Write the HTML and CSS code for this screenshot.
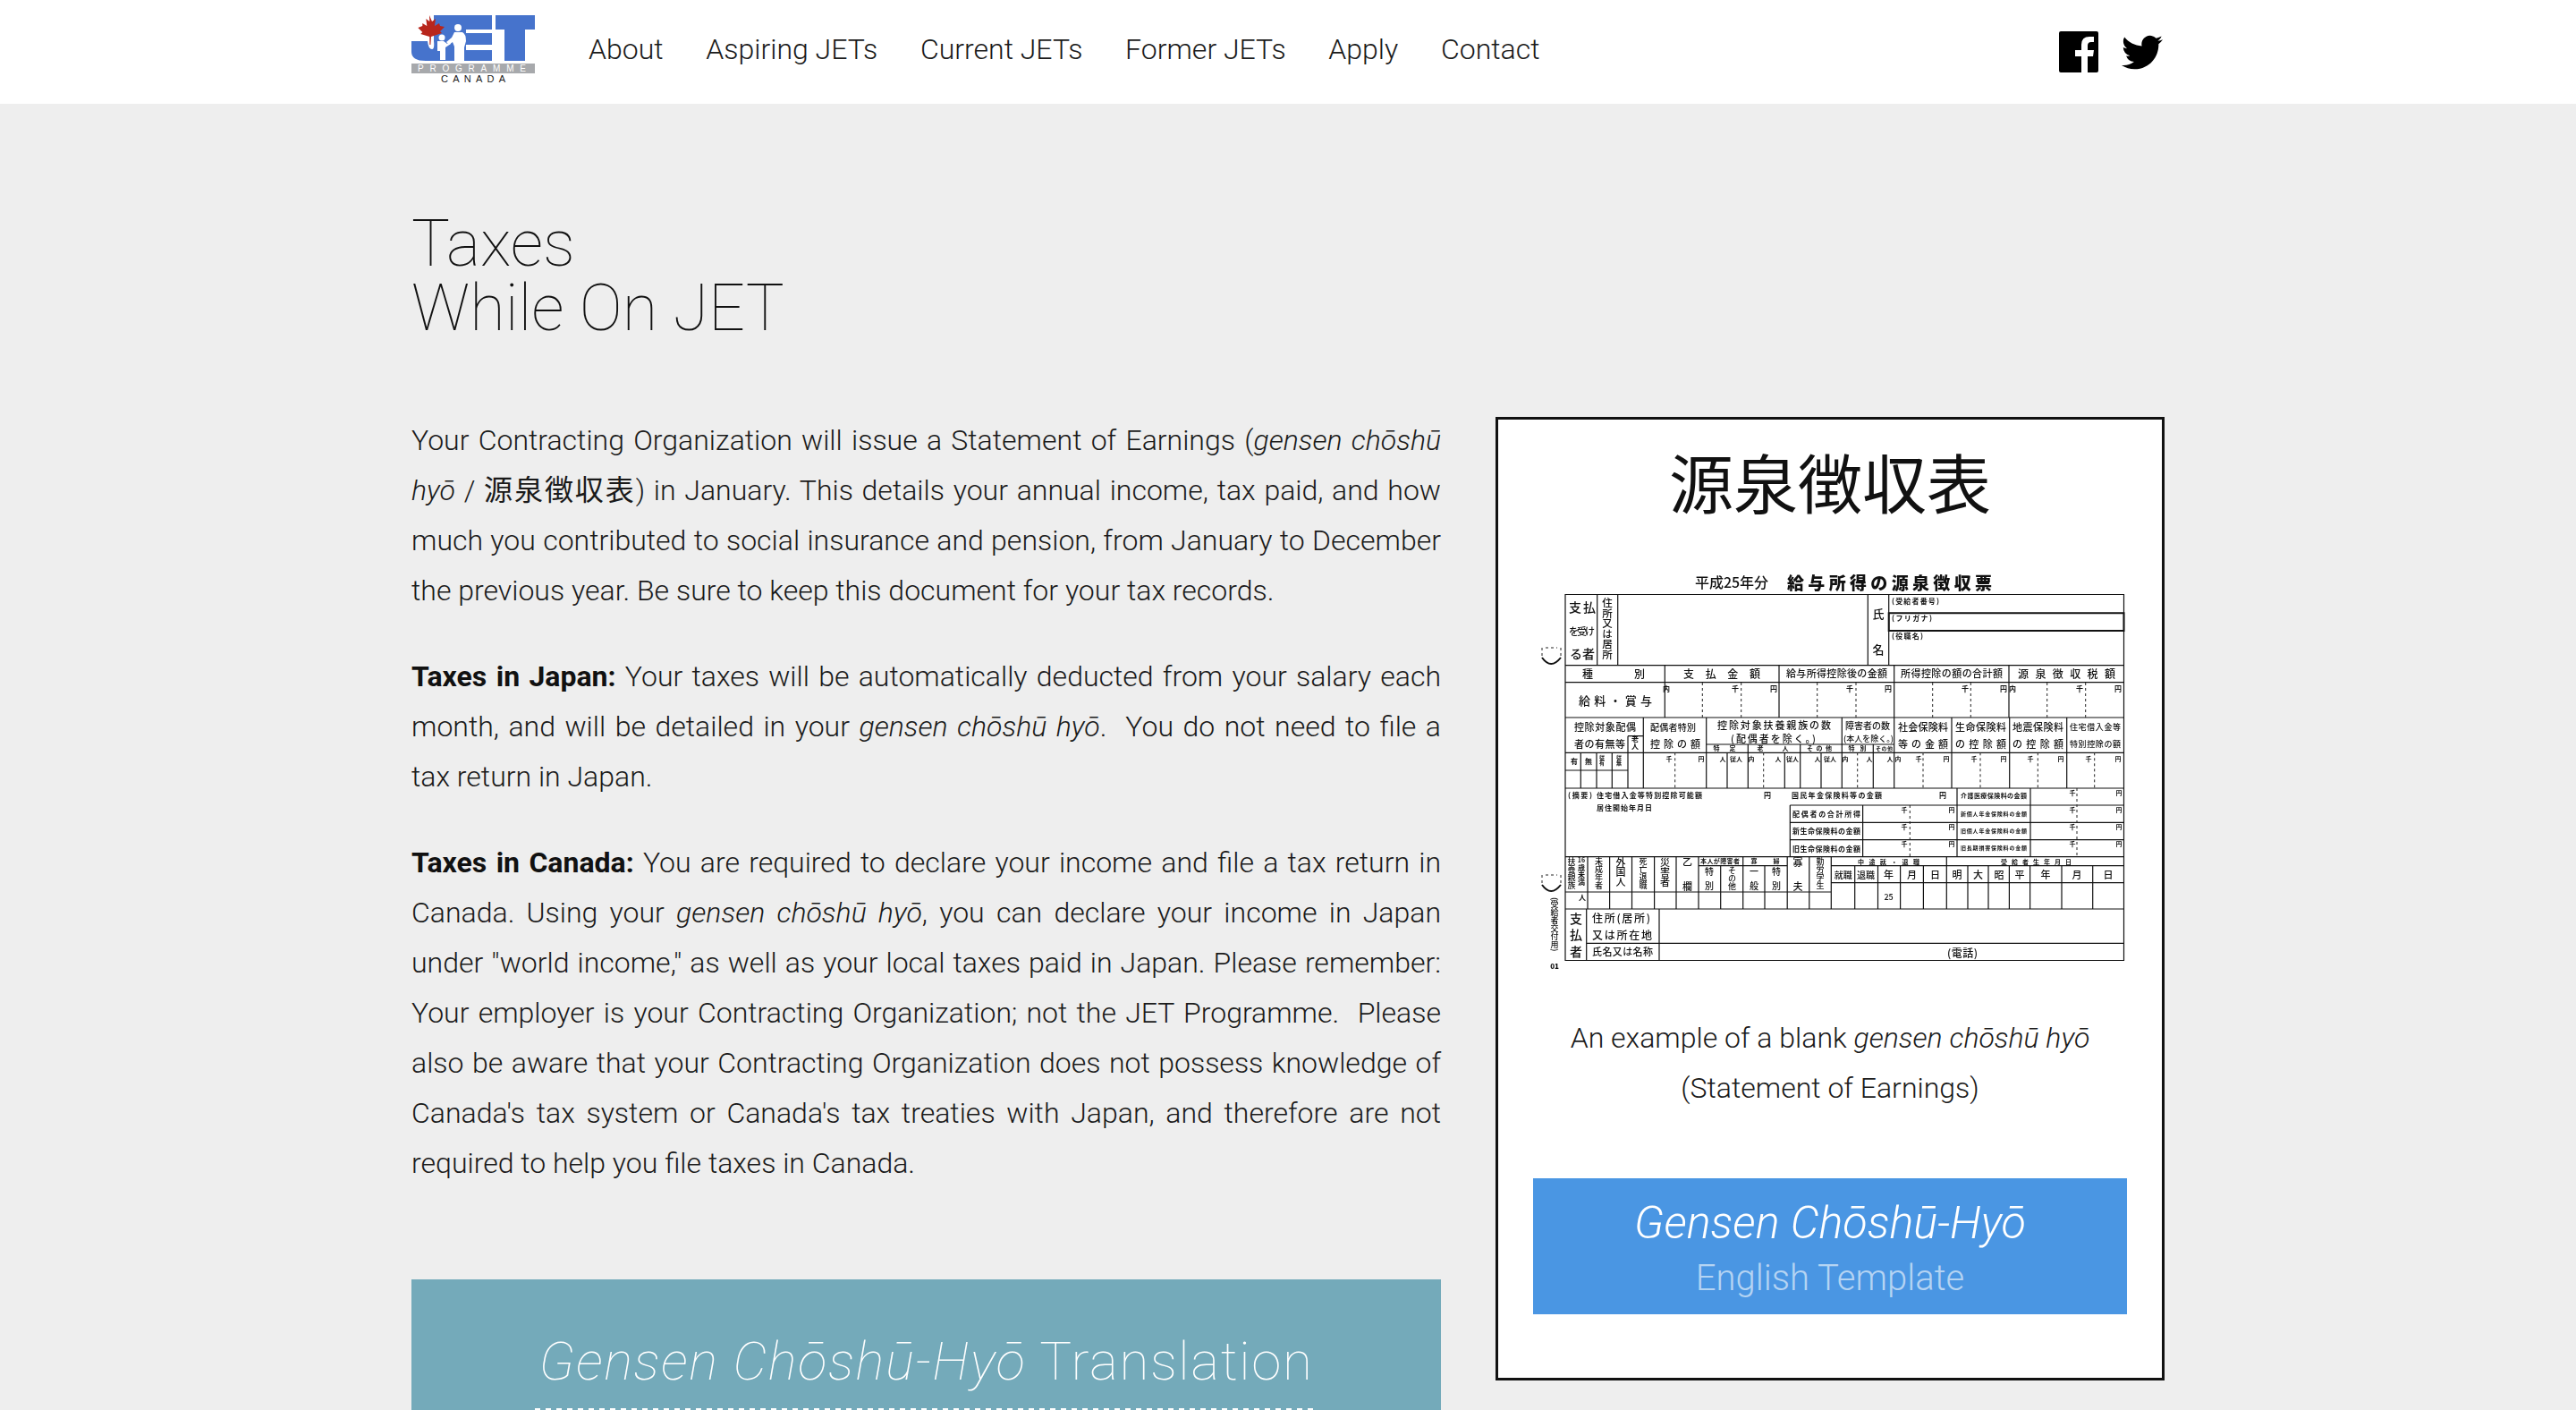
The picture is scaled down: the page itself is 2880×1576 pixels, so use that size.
FILE: index.html
```html
<!DOCTYPE html>
<html lang="en">
<head>
<meta charset="utf-8">
<title>Taxes While On JET</title>
<link rel="stylesheet" href="styles.css">
</head>
<body>
<div class="page">
<header class="topbar">
  <div class="wrap bar-inner">
    <a class="logo" href="#" aria-label="JET Programme Canada">
      <svg class="logo-svg" viewBox="460 15 140 80" width="140" height="80">
        <path class="logo-blue" d="M485 17H550V33H521V37H550V50H521V56H550V68H476Q460 68 460 58V46H478Q479 55 483 55Q486 55 485 46Z"/>
        <path class="logo-blue" d="M554 17H598V33H587V68H564V33H554Z"/>
        <path class="logo-red" d="M480 17l3 7 4-3-1 8 5-3 1 3 5 1-5 5 2 2-9 3-3 1-.6 9h-1l-.1-9-10-3 2-2-5-5 5-2 0-3 5 3-1-8 4 3z"/>
        <circle class="logo-white" cx="512" cy="31" r="4"/>
        <path class="logo-white" d="M508 36H517Q521 38 521 46L519 53V68H508V52L506 47 502 50 499 47 505 42Z"/>
        <circle class="logo-white" cx="494" cy="42" r="3.5"/>
        <path class="logo-white" d="M489 46H496L500 49 503 47 504 49 498 53V67H492V57H489Z"/>
        <rect class="logo-grey" x="460" y="71" width="138" height="11"/>
        <text class="logo-prog" x="467" y="80" textLength="121">PROGRAMME</text>
        <text class="logo-can" x="493" y="92" textLength="72">CANADA</text>
      </svg>
    </a>
    <nav class="nav">
      <a href="#">About</a>
      <a href="#">Aspiring JETs</a>
      <a href="#">Current JETs</a>
      <a href="#">Former JETs</a>
      <a href="#">Apply</a>
      <a href="#">Contact</a>
    </nav>
    <div class="social">
      <svg class="fb" viewBox="0 0 44 46" width="44" height="46"><path d="M2 0H42Q44 0 44 2V44Q44 46 42 46H32V28H38L39 21H32V16Q32 12 36 12H39V6H34Q25 6 25 15V21H18V28H25V46H2Q0 46 0 44V2Q0 0 2 0Z"/></svg>
      <svg class="tw" viewBox="0 0 24 20" width="46" height="39"><path d="M23.953 2.57a10 10 0 0 1-2.825.775 4.958 4.958 0 0 0 2.163-2.723c-.951.555-2.005.959-3.127 1.184a4.92 4.92 0 0 0-8.384 4.482C7.69 6.095 4.067 4.13 1.64 1.162a4.822 4.822 0 0 0-.666 2.475c0 1.71.87 3.213 2.188 4.096a4.904 4.904 0 0 1-2.228-.616v.06a4.923 4.923 0 0 0 3.946 4.827 4.996 4.996 0 0 1-2.212.085 4.936 4.936 0 0 0 4.604 3.417 9.867 9.867 0 0 1-6.102 2.105c-.39 0-.779-.023-1.17-.067a13.995 13.995 0 0 0 7.557 2.209c9.053 0 13.998-7.496 13.998-13.985 0-.21 0-.42-.015-.63A9.935 9.935 0 0 0 24 2.59z"/></svg>
    </div>
  </div>
</header>
<main class="wrap main">
  <h1 class="title">Taxes<br>While On JET</h1>
  <div class="columns">
    <section class="copy">
      <p>Your Contracting Organization will issue a Statement of Earnings (<em>gensen chōshū hyō</em> / <span class="cjk">源泉徴収表</span>) in January. This details your annual income, tax paid, and how much you contributed to social insurance and pension, from January to December the previous year. Be sure to keep this document for your tax records.</p>
      <p><strong>Taxes in Japan:</strong> Your taxes will be automatically deducted from your salary each month, and will be detailed in your <em>gensen chōshū hyō</em>.&nbsp; You do not need to file a tax return in Japan.</p>
      <p><strong>Taxes in Canada:</strong> You are required to declare your income and file a tax return in Canada. Using your <em>gensen chōshū hyō</em>, you can declare your income in Japan under "world income," as well as your local taxes paid in Japan. Please remember: Your employer is your Contracting Organization; not the JET Programme.&nbsp; Please also be aware that your Contracting Organization does not possess knowledge of Canada's tax system or Canada's tax treaties with Japan, and therefore are not required to help you file taxes in Canada.</p>
      <a class="translate" href="#"><span class="translate-label"><em>Gensen Chōshū-Hyō</em> Translation</span></a>
    </section>
    <aside class="card">
      <svg class="form" viewBox="1714 490 664 642" width="664" height="642">
        <text class="f-title c" x="2046" y="535">源泉徴収表</text>
        <text class="t16 c" x="1936" y="649">平成25年分</text>
        <text class="t17 b" x="1998" y="649" textLength="229">給与所得の源泉徴収票</text>
        <path class="ln" d="M1750 663.5H2374.5V1072.5H1750ZM1750 742.7H2374.5M1750 761.7H2374.5M1750 801H2374.5M1750 840.3H2374.5M1750 880H2374.5M1750 956.7H2374.5M1750 1015H2374.5M1773.7 1053.3H2374.5M1785.7 663.5V742.7M1808.7 663.5V742.7M2088.3 663.5V742.7M2111.7 663.5V742.7M1861.3 742.7V801M1989 742.7V801M2117.7 742.7V801M2246 742.7V801M1837.3 801V880M1907.7 801V880M2059.3 801V880M2117.7 801V880M2182 801V880M2246.7 801V880M2310.7 801V880M1820 821.7H1837.3M1820 821.7V880M1907.7 831H2117.7M1954.3 831V880M2012.7 831V880M2094.3 831V880M1767.3 840.3V880M1785 840.3V880M1802.3 840.3V880M1931 840.3V880M1995.3 840.3V880M2036 840.3V880M1750 860H1820M2001.3 899V956.7M2082.6 899V956.7M2188 880V956.7M2270 880V956.7M2001.3 899H2188M2188 899H2374.5M2001.3 918.3H2374.5M2001.3 937.7H2374.5M1775 956.7V1015M1799.6 956.7V1015M1824.5 956.7V1015M1849.6 956.7V1015M1874 956.7V1015M1899 956.7V1015M1923.7 966.7V1015M1948.7 956.7V1015M1973 966.7V1015M1998.2 956.7V1015M2022.8 956.7V1015M2047.3 956.7V1015M1899 966.7H1998.2M2047.3 966.7H2374.5M2047.3 985.7H2374.5M1750 996H2047.3M2073.7 966.7V1015M2099.5 966.7V1015M2124.6 966.7V1015M2150.4 966.7V1015M2176.3 956.7V1015M2200 966.7V1015M2223 966.7V1015M2246.4 966.7V1015M2269.6 966.7V1015M2305 966.7V1015M2339.7 966.7V1015M1773.7 1015V1072.5M1855 1015V1072.5"/>
        <path class="ln-thick" d="M2111.7 684.3H2374.5V704H2111.7Z"/>
        <path class="dash" d="M1903.3 762V801M1946.7 762V801M2031.7 762V801M2075 762V801M2160.7 762V801M2203.3 762V801M2288.7 762V801M2331.7 762V801M1872.7 840.3V880M1971.7 840.3V880M2076.7 840.3V880M2150 840.3V880M2214 840.3V880M2278.3 840.3V880M2341.7 840.3V880M2135.3 899V956.7M2322 880V956.7"/>
        <path class="arc" d="M1724 734Q1734 748 1745 734M1724 988Q1734 1002 1745 988"/>
        <path class="dash" d="M1724 723V733M1745 723V733M1724 977V987M1745 977V987M1728 723H1741M1728 977H1741"/>

        <g class="form-labels">
        <text class="t14" x="1754" y="678" textLength="30">支 払</text>
        <text class="t11" x="1754" y="705" textLength="29">を受け</text>
        <text class="t14" x="1755" y="730" textLength="28">る 者</text>
        <text class="t115 v" x="1797" y="668">住所又は居所</text>
        <text class="t13 c" x="2100" y="685">氏</text>
        <text class="t13 c" x="2100" y="725">名</text>
        <text class="t8" x="2115" y="671" textLength="53">(受給者番号)</text>
        <text class="t8" x="2115" y="690" textLength="45">(フリガナ)</text>
        <text class="t8" x="2115" y="710" textLength="35">(役職名)</text>

        <text class="t12 c" x="1775" y="752">種</text>
        <text class="t12 c" x="1833" y="752">別</text>
        <text class="t12" x="1882" y="752" textLength="86">支払金額</text>
        <text class="t11" x="1997" y="752" textLength="113">給与所得控除後の金額</text>
        <text class="t11" x="2125" y="752" textLength="114">所得控除の額の合計額</text>
        <text class="t12" x="2256" y="752" textLength="109">源泉徴収税額</text>

        <text class="t13" x="1765" y="782" textLength="82">給料・賞与</text>
        <text class="t8 c" x="1863" y="769">内</text><text class="t8 c" x="1940" y="769">千</text><text class="t8 c" x="1983" y="769">円</text>
        <text class="t8 c" x="2068" y="769">千</text><text class="t8 c" x="2111" y="769">円</text>
        <text class="t8 c" x="2197" y="769">千</text><text class="t8 c" x="2240" y="769">円</text>
        <text class="t8 c" x="2250" y="769">内</text><text class="t8 c" x="2325" y="769">千</text><text class="t8 c" x="2368" y="769">円</text>

        <text class="t11" x="1760" y="812" textLength="69">控除対象配偶</text>
        <text class="t11" x="1760" y="831" textLength="57">者の有無等</text>
        <text class="t8 v" x="1828" y="822">老人</text>
        <text class="t10" x="1845" y="812" textLength="51">配偶者特別</text>
        <text class="t11" x="1845" y="831" textLength="56">控除の額</text>
        <text class="t11" x="1920" y="810" textLength="127">控除対象扶養親族の数</text>
        <text class="t11" x="1935" y="825" textLength="95">(配偶者を除く。)</text>
        <text class="t7 c" x="1919" y="836">特</text><text class="t7 c" x="1937" y="836">定</text><text class="t7 c" x="1968" y="836">老</text><text class="t7 c" x="1996" y="836">人</text>
        <text class="t7" x="2020" y="836" textLength="28">その他</text>
        <text class="t10" x="2063" y="810" textLength="50">障害者の数</text>
        <text class="t9" x="2061" y="825" textLength="56">(本人を除く。)</text>
        <text class="t7 c" x="2070" y="836">特</text><text class="t7 c" x="2083" y="836">別</text>
        <text class="t6" x="2097" y="836" textLength="19">その他</text>
        <text class="t11" x="2122" y="812" textLength="56">社会保険料</text><text class="t11" x="2122" y="831" textLength="56">等の金額</text>
        <text class="t11" x="2186" y="812" textLength="57">生命保険料</text><text class="t11" x="2186" y="831" textLength="57">の控除額</text>
        <text class="t11" x="2250" y="812" textLength="57">地震保険料</text><text class="t11" x="2250" y="831" textLength="57">の控除額</text>
        <text class="t9" x="2314" y="812" textLength="57">住宅借入金等</text><text class="t9" x="2314" y="831" textLength="57">特別控除の額</text>

        <text class="t8 c" x="1760" y="850">有</text><text class="t8 c" x="1776" y="850">無</text>
        <text class="t6 v" x="1791" y="844">従有</text><text class="t6 v" x="1810" y="844">従無</text>
        <text class="t7 c" x="1866" y="848">千</text><text class="t7 c" x="1902" y="848">円</text><text class="t7 c" x="1926" y="848">人</text><text class="t7 c" x="1941" y="848">従人</text><text class="t7 c" x="1958" y="848">内</text><text class="t7 c" x="1988" y="848">人</text><text class="t7 c" x="2004" y="848">従人</text><text class="t7 c" x="2032" y="848">人</text><text class="t7 c" x="2046" y="848">従人</text>
        <text class="t7 c" x="2063" y="848">内</text><text class="t7 c" x="2090" y="848">人</text><text class="t7 c" x="2113" y="848">人</text><text class="t7 c" x="2122" y="848">内</text><text class="t7 c" x="2145" y="848">千</text><text class="t7 c" x="2176" y="848">円</text><text class="t7 c" x="2207" y="848">千</text><text class="t7 c" x="2240" y="848">円</text><text class="t7 c" x="2270" y="848">千</text><text class="t7 c" x="2304" y="848">円</text><text class="t7 c" x="2335" y="848">千</text><text class="t7 c" x="2368" y="848">円</text>

        <text class="t8" x="1753" y="888" textLength="27">(摘要)</text>
        <text class="t8" x="1785" y="888" textLength="118">住宅借入金等特別控除可能額</text>
        <text class="t8 c" x="1976" y="888">円</text>
        <text class="t8" x="1785" y="902" textLength="62">居住開始年月日</text>
        <text class="t8" x="2003" y="888" textLength="101">国民年金保険料等の金額</text>
        <text class="t8 c" x="2172" y="888">円</text>
        <text class="t8" x="2004" y="909" textLength="76">配偶者の合計所得</text>
        <text class="t8" x="2004" y="928" textLength="76">新生命保険料の金額</text>
        <text class="t8" x="2004" y="948" textLength="76">旧生命保険料の金額</text>
        <text class="t7 c" x="2129" y="905">千</text><text class="t7 c" x="2182" y="905">円</text>
        <text class="t7 c" x="2129" y="924">千</text><text class="t7 c" x="2182" y="924">円</text>
        <text class="t7 c" x="2129" y="943">千</text><text class="t7 c" x="2182" y="943">円</text>
        <text class="t7" x="2192" y="889" textLength="74">介護医療保険料の金額</text>
        <text class="t6" x="2192" y="909" textLength="74">新個人年金保険料の金額</text>
        <text class="t6" x="2192" y="928" textLength="74">旧個人年金保険料の金額</text>
        <text class="t6" x="2192" y="947" textLength="74">旧長期損害保険料の金額</text>
        <text class="t7 c" x="2317" y="886">千</text><text class="t7 c" x="2369" y="886">円</text>
        <text class="t7 c" x="2317" y="905">千</text><text class="t7 c" x="2369" y="905">円</text>
        <text class="t7 c" x="2317" y="924">千</text><text class="t7 c" x="2369" y="924">円</text>
        <text class="t7 c" x="2317" y="943">千</text><text class="t7 c" x="2369" y="943">円</text>

        <text class="t9 v" x="1757" y="958">扶養親族</text>
        <text class="t7 c" x="1768" y="961">16</text><text class="t8 v" x="1768" y="966">歳未満</text>
        <text class="t9 v" x="1787.5" y="958">未成年者</text>
        <text class="t11 v" x="1812" y="958">外国人</text>
        <text class="t9 v" x="1837" y="958">死亡退職</text>
        <text class="t11 v" x="1861.6" y="958">災害者</text>
        <text class="t11 c" x="1886.6" y="963">乙</text><text class="t11 c" x="1886.6" y="990">欄</text>
        <text class="t7" x="1901" y="961.7" textLength="44">本人が障害者</text>
        <text class="t7 c" x="1961" y="961.7">寡</text><text class="t7 c" x="1986" y="961.7">婦</text>
        <text class="t10 c" x="1911" y="973">特</text><text class="t10 c" x="1911" y="989">別</text>
        <text class="t9 v" x="1936.6" y="968">その他</text>
        <text class="t10 c" x="1961" y="973">一</text><text class="t10 c" x="1961" y="989">般</text>
        <text class="t10 c" x="1986" y="973">特</text><text class="t10 c" x="1986" y="989">別</text>
        <text class="t11 c" x="2010" y="963">寡</text><text class="t11 c" x="2010" y="990">夫</text>
        <text class="t9 v" x="2035" y="958">勤労学生</text>
        <text class="t8 c" x="1769" y="1002">人</text>
        <text class="t7" x="2077" y="962.7" textLength="69">中途就・退職</text>
        <text class="t7" x="2237" y="962.7" textLength="79">受給者生年月日</text>
        <text class="t10 c" x="2060.7" y="977">就職</text><text class="t10 c" x="2086" y="977">退職</text>
        <text class="t11 c" x="2111.6" y="977">年</text><text class="t11 c" x="2137.5" y="977">月</text><text class="t11 c" x="2163.4" y="977">日</text><text class="t11 c" x="2188" y="977">明</text><text class="t11 c" x="2211.6" y="977">大</text><text class="t11 c" x="2235" y="977">昭</text><text class="t11 c" x="2258" y="977">平</text><text class="t11 c" x="2287" y="977">年</text><text class="t11 c" x="2322" y="977">月</text><text class="t11 c" x="2357" y="977">日</text>
        <text class="t9 c" x="2111.6" y="1002">25</text>

        <text class="t14 c" x="1762" y="1026">支</text><text class="t14 c" x="1762" y="1044">払</text><text class="t14 c" x="1762" y="1063">者</text>
        <text class="t12" x="1780" y="1025" textLength="65">住所(居所)</text>
        <text class="t12" x="1780" y="1044" textLength="67">又は所在地</text>
        <text class="t11" x="1780" y="1063" textLength="68">氏名又は名称</text>
        <text class="t12" x="2177" y="1064" textLength="34">(電話)</text>
        <text class="t9 v" x="1738" y="1003">(受給者交付用)</text>
        <text class="t8 c b" x="1738" y="1079">01</text>
        </g>
      </svg>
      <p class="caption">An example of a blank <em>gensen chōshū hyō</em><br>(Statement of Earnings)</p>
      <a class="template" href="#">
        <span class="template-main">Gensen Chōshū-Hyō</span>
        <span class="template-sub">English Template</span>
      </a>
    </aside>
  </div>
</main>
</div>
</body>
</html>
```

FILE: styles.css
```css
* { box-sizing: border-box; }
html, body { margin: 0; padding: 0; }
body {
  background: #eee;
  color: #1a1a1a;
  font-family: Roboto, "Noto Sans CJK JP", sans-serif;
  font-weight: 300;
  font-size: 32px;
}
a { color: inherit; text-decoration: none; }
.page { height: 100vh; overflow: hidden; }
.wrap { width: 1960px; margin: 0 auto; }
.topbar { background: #fff; height: 116px; }
.bar-inner { display: flex; align-items: flex-start; height: 116px; }
.logo { display: block; width: 140px; height: 80px; margin-top: 15px; }
.logo-svg { display: block; }
.logo-blue { fill: #4673cc; }
.logo-white { fill: #fff; }
.logo-red { fill: #b8261c; }
.logo-grey { fill: #a7a9ac; }
.logo-prog { fill: #fff; font: 400 10px "Liberation Sans", sans-serif; }
.logo-can { fill: #222; font: 400 11px "Liberation Sans", sans-serif; }
.nav { display: flex; gap: 47.7px; margin-left: 58px; padding-top: 33px; line-height: 44px; }
.social { margin-left: auto; display: flex; align-items: center; gap: 26px; padding-top: 35px; padding-right: 2px; }
.social svg { display: block; fill: #000; }
.main { padding-top: 121px; }
.title { margin: 0 0 83px; font-size: 72px; font-weight: 100; line-height: 72px; color: #111; }
.columns { display: grid; grid-template-columns: 1151px 748px; column-gap: 61px; align-items: start; }
.copy p { margin: 0 0 40px; line-height: 56px; text-align: justify; }
.copy strong { font-weight: 700; color: #111; }
.cjk { font-family: "Noto Sans CJK JP", sans-serif; font-weight: 400; line-height: 1; }
.translate { display: block; margin-top: 102px; height: 300px; background: #74aaba; color: #fff; text-align: center; padding-top: 56px; }
.translate-label {
  display: inline-block;
  font-size: 60px;
  font-weight: 100;
  letter-spacing: 1.63px;
  line-height: 72px;
  padding: 0 5px 19px;
  background: repeating-linear-gradient(90deg, #fff 0 6px, transparent 6px 12px) left bottom / 100% 3px no-repeat;
}
.card { margin-top: 2px; height: 1077px; background: #fff; border: 3px solid #111; padding: 21px 39px 0; }
.form { display: block; overflow: visible; filter: blur(0.3px); margin-top: 1px; margin-bottom: -1px; }
.form text { font-family: "Noto Sans CJK JP", sans-serif; font-weight: 500; fill: #111; dominant-baseline: central; }
.form-labels { transform: translateY(-1px); }
.form .f-title { font-size: 72px; font-weight: 400; }
.form .t6, .form .t7, .form .t8 { font-weight: 700; }
.form .b { font-weight: 900; }
.form .c { text-anchor: middle; }
.form .v { writing-mode: vertical-rl; }
.t6 { font-size: 6px; }
.t7 { font-size: 7px; }
.t8 { font-size: 8px; }
.t9 { font-size: 9px; }
.t10 { font-size: 10px; }
.t11 { font-size: 11px; }
.t115 { font-size: 11.5px; }
.t12 { font-size: 12px; }
.t13 { font-size: 13px; }
.t14 { font-size: 14px; }
.t16 { font-size: 16px; }
.t17 { font-size: 19px; }
.ln { fill: none; stroke: #111; stroke-width: 1.2; }
.ln-thick { fill: none; stroke: #111; stroke-width: 2; }
.dash { fill: none; stroke: #222; stroke-width: 1; stroke-dasharray: 3 3; }
.arc { fill: none; stroke: #111; stroke-width: 2; }
.caption { margin: 0; text-align: center; line-height: 56px; }
.template { display: block; margin-top: 73px; height: 152px; background: #4a96e3; color: #fff; text-align: center; padding-top: 17px; }
.template-main { display: block; font-size: 50.4px; font-style: italic; font-weight: 300; line-height: 66px; }
.template-sub { display: block; font-size: 40px; font-weight: 300; line-height: 58px; color: rgba(255,255,255,0.6); }
```
